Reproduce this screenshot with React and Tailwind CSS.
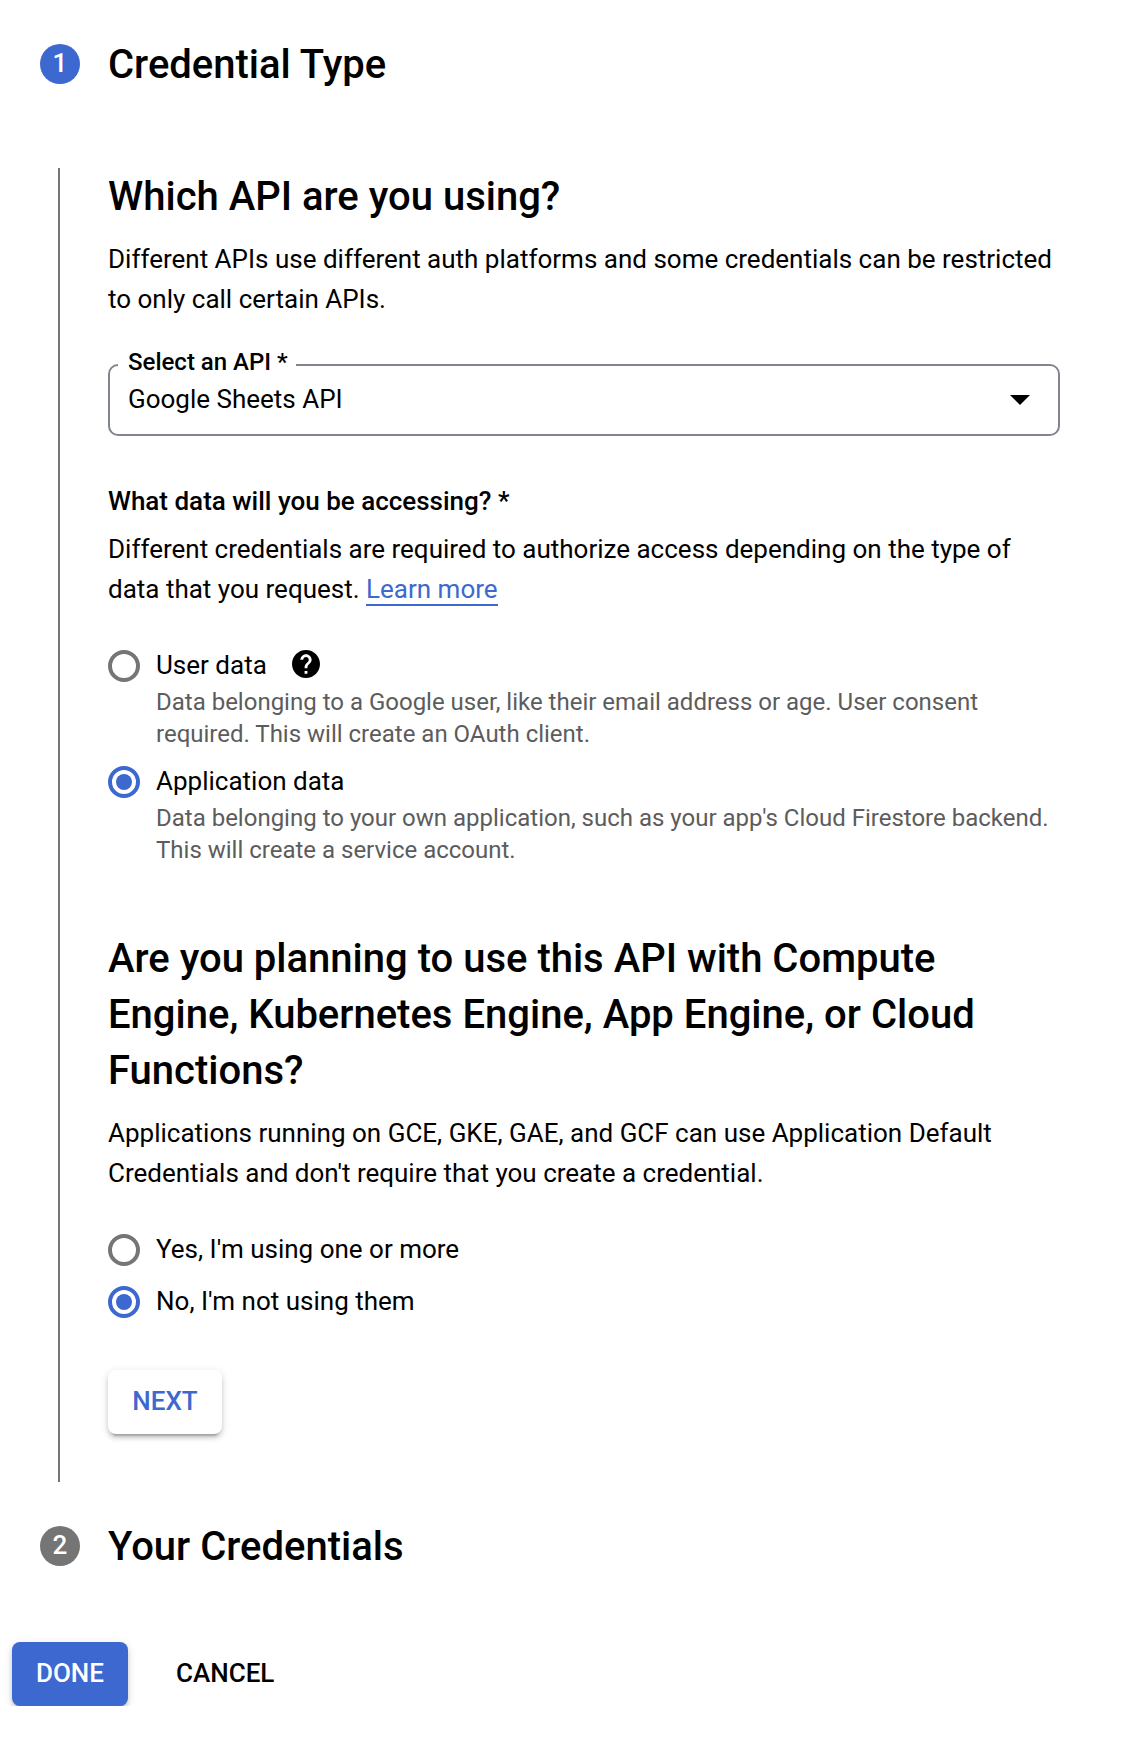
import React from "react";

function StepHeader({ number, title, active }) {
  return (
    <div className="flex h-14 items-center pl-10">
      <span
        className={`flex size-10 items-center justify-center rounded-full pb-0.5 text-[26px] leading-none font-medium text-white ${
          active ? "bg-[#3d68d0]" : "bg-[#757575]"
        }`}
      >
        {number}
      </span>
      <h2 className="mt-0.5 ml-7 text-[40px] leading-14 font-medium whitespace-nowrap">{title}</h2>
    </div>
  );
}

function Radio({ label, description, checked, help }) {
  return (
    <div className="flex gap-4">
      <span
        className={`flex size-8 shrink-0 items-center justify-center rounded-full border-4 ${
          checked ? "border-[#3d68d0]" : "border-[#757575]"
        }`}
      >
        {checked && <span className="size-4 rounded-full bg-[#3d68d0]" />}
      </span>
      <div>
        <div className="-mt-px flex h-8 items-center text-[26px] leading-8 whitespace-nowrap">
          {label}
          {help && (
            <svg viewBox="2 2 20 20" className="-mt-0.5 ml-[25px] size-7">
              <path d="M12 2C6.48 2 2 6.48 2 12s4.48 10 10 10 10-4.48 10-10S17.52 2 12 2zm1 17h-2v-2h2v2zm2.07-7.75l-.9.92C13.45 12.9 13 13.5 13 15h-2v-.5c0-1.1.45-2.1 1.17-2.83l1.24-1.26c.37-.36.59-.86.59-1.41 0-1.1-.9-2-2-2s-2 .9-2 2H8c0-2.21 1.79-4 4-4s4 1.79 4 4c0 .88-.36 1.68-.93 2.25z" />
            </svg>
          )}
        </div>
        {description && (
          <div className="mt-[5px] text-[24px] leading-8 whitespace-nowrap text-[#5c5c5c]">
            {description.map((line) => (
              <div key={line}>{line}</div>
            ))}
          </div>
        )}
      </div>
    </div>
  );
}

export default function App() {
  return (
    <div className="h-[1744px] w-[1134px] overflow-hidden bg-white pt-9 font-['Roboto',sans-serif] text-black">
      <StepHeader number="1" title="Credential Type" active />

      <section className="mt-[76px] ml-[58px] h-[1314px] border-l-2 border-[#757575] pl-12">
        <h2 className="pt-px text-[40px] leading-14 font-medium">Which API are you using?</h2>
        <p className="mt-3.5 text-[26px] leading-10 whitespace-nowrap">
          Different APIs use different auth platforms and some credentials can be restricted
          <br />
          to only call certain APIs.
        </p>

        <div className="relative mt-[45px] flex h-[72px] w-[952px] items-center justify-between rounded-[10px] border-2 border-[#80868b] pr-7 pl-[18px]">
          <span className="absolute -top-5 left-2 bg-white pr-2 pl-2.5 text-[24px] leading-8 font-medium whitespace-nowrap">
            Select an API *
          </span>
          <span className="-mt-0.5 text-[26px] leading-10">Google Sheets API</span>
          <svg viewBox="0 0 20 10" className="h-2.5 w-5">
            <path d="M0 0h20L10 10z" />
          </svg>
        </div>

        <h3 className="mt-[45px] text-[26px] leading-10 font-medium">What data will you be accessing? *</h3>
        <p className="mt-2 text-[26px] leading-10 whitespace-nowrap">
          Different credentials are required to authorize access depending on the type of
          <br />
          data that you request.{" "}
          <a className="border-b-2 border-[#3d68d0] text-[#3d68d0]">Learn more</a>
        </p>

        <div className="mt-[41px] flex flex-col gap-4">
          <Radio
            label="User data"
            help
            description={[
              "Data belonging to a Google user, like their email address or age. User consent",
              "required. This will create an OAuth client.",
            ]}
          />
          <Radio
            label="Application data"
            checked
            description={[
              "Data belonging to your own application, such as your app's Cloud Firestore backend.",
              "This will create a service account.",
            ]}
          />
        </div>

        <h2 className="mt-[65px] text-[40px] leading-14 font-medium whitespace-nowrap">
          Are you planning to use this API with Compute
          <br />
          Engine, Kubernetes Engine, App Engine, or Cloud
          <br />
          Functions?
        </h2>
        <p className="mt-3.5 text-[26px] leading-10 whitespace-nowrap">
          Applications running on GCE, GKE, GAE, and GCF can use Application Default
          <br />
          Credentials and don't require that you create a credential.
        </p>

        <div className="mt-[41px] flex flex-col gap-5">
          <Radio label="Yes, I'm using one or more" />
          <Radio label="No, I'm not using them" checked />
        </div>

        <button className="mt-[52px] flex h-16 w-[114px] items-center justify-center rounded-lg bg-white pb-0.5 text-[26px] font-medium text-[#3d68d0] shadow-[0_6px_2px_-4px_rgba(0,0,0,0.2),0_4px_4px_0_rgba(0,0,0,0.14),0_2px_10px_0_rgba(0,0,0,0.12)]">
          NEXT
        </button>
      </section>

      <div className="mt-9">
        <StepHeader number="2" title="Your Credentials" />
      </div>

      <div className="mt-12 flex h-[84px] items-end overflow-hidden pl-3">
        <button className="flex h-16 w-[116px] items-center justify-center rounded-lg bg-[#3d68d0] pb-0.5 text-[26px] font-medium text-white shadow-[0_6px_2px_-4px_rgba(0,0,0,0.2),0_4px_4px_0_rgba(0,0,0,0.14),0_2px_10px_0_rgba(0,0,0,0.12)]">
          DONE
        </button>
        <button className="ml-12 flex h-16 items-center pb-0.5 text-[26px] font-medium">CANCEL</button>
      </div>
    </div>
  );
}
